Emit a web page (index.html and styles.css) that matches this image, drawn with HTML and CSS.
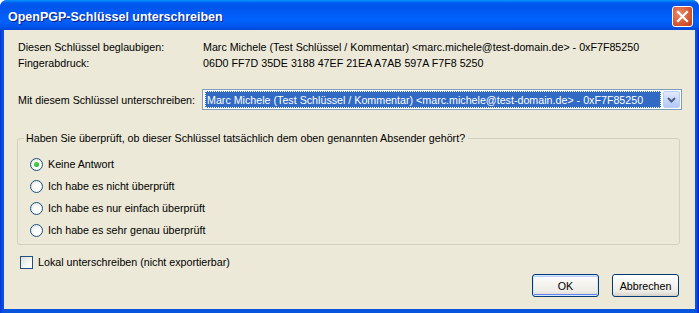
FILE: index.html
```html
<!DOCTYPE html>
<html lang="de">
<head>
  <meta charset="UTF-8">
  <title>OpenPGP-Schlüssel unterschreiben</title>
  <link rel="stylesheet" href="styles.css">
</head>
<body>
  <div class="window">
    <div class="titlebar">
      <span class="title">OpenPGP-Schlüssel unterschreiben</span>
      <button class="close" aria-label="Schließen">
        <svg width="13" height="13" viewBox="0 0 13 13">
          <path d="M2 2 L11 11 M11 2 L2 11" stroke="#fff" stroke-width="2.2" stroke-linecap="square"/>
        </svg>
      </button>
    </div>

    <div class="content">
      <div class="info">
        <span>Diesen Schlüssel beglaubigen:</span>
        <span>Marc Michele (Test Schlüssel / Kommentar) &lt;marc.michele@test-domain.de&gt; - 0xF7F85250</span>
        <span>Fingerabdruck:</span>
        <span>06D0 FF7D 35DE 3188 47EF 21EA A7AB 597A F7F8 5250</span>
      </div>

      <div class="signer">
        <label>Mit diesem Schlüssel unterschreiben:</label>
        <div class="combo">
          <span class="combo-value"><span class="combo-text">Marc Michele (Test Schlüssel / Kommentar) &lt;marc.michele@test-domain.de&gt; - 0xF7F85250</span></span>
          <span class="combo-btn">
            <svg width="9" height="6" viewBox="0 0 9 6">
              <path d="M1 1 L4.5 4.5 L8 1" fill="none" stroke="#4d6185" stroke-width="2"/>
            </svg>
          </span>
        </div>
      </div>

      <fieldset class="group">
        <legend>Haben Sie überprüft, ob dieser Schlüssel tatsächlich dem oben genannten Absender gehört?</legend>
        <label class="option"><input type="radio" name="trust" checked> Keine Antwort</label>
        <label class="option"><input type="radio" name="trust"> Ich habe es nicht überprüft</label>
        <label class="option"><input type="radio" name="trust"> Ich habe es nur einfach überprüft</label>
        <label class="option"><input type="radio" name="trust"> Ich habe es sehr genau überprüft</label>
      </fieldset>

      <label class="local"><input type="checkbox"> Lokal unterschreiben (nicht exportierbar)</label>

      <div class="actions">
        <button class="btn default">OK</button>
        <button class="btn">Abbrechen</button>
      </div>
    </div>
  </div>
</body>
</html>
```

FILE: styles.css
```css
body {
  margin: 0;
  background: #fff;
  font-family: 'Liberation Sans', Arial, sans-serif;
  font-size: 10.7px;
  color: #000;
}

.window {
  width: 699px;
  height: 313px;
  display: flex;
  flex-direction: column;
  border-radius: 7px 7px 0 0;
  overflow: hidden;
  background: linear-gradient(90deg, #0831d9 0, #0a4be0 2px, #0855dd 4px, #0855dd 695px, #0a4be0 697px, #0019cf 699px);
}

.titlebar {
  height: 30px;
  flex: none;
  display: flex;
  justify-content: space-between;
  align-items: center;
  padding: 3px 6px 0 8px;
  box-sizing: border-box;
  background: linear-gradient(180deg, #0997ff 0, #0058ee 3px, #0055ea 7px, #005cf8 14px, #0062fd 20px, #0057ec 26px, #0048d8 30px);
}

.title {
  color: #fff;
  font-family: 'Liberation Sans', Arial, sans-serif;
  font-weight: bold;
  font-size: 12.5px;
  text-shadow: 1px 1px 0 #0a1883;
}

.close {
  width: 21px;
  height: 21px;
  padding: 0;
  border: 1px solid #fff;
  border-radius: 3px;
  background: radial-gradient(circle at 35% 35%, #ea8b6e, #d75b36 55%, #c0391a);
  display: flex;
  justify-content: center;
  align-items: center;
}

.content {
  flex: 1;
  margin: 0 4px 4px;
  background: #ece9d8;
  padding: 9px 0 0 14px;
  display: flex;
  flex-direction: column;
}

.info {
  display: grid;
  grid-template-columns: 185px 1fr;
  line-height: 16px;
}

.signer {
  display: flex;
  align-items: center;
  margin-top: 18px;
}

.signer label {
  width: 184px;
}

.combo {
  width: 480px;
  height: 21px;
  box-sizing: border-box;
  border: 1px solid #7f9db9;
  background: #fff;
  display: flex;
  align-items: center;
  padding: 1px 1px 1px 2px;
}

.combo-value {
  flex: 1;
  height: 15px;
  background: #316ac5;
  color: #fff;
  border: 1px dotted #fff;
  margin-right: 2px;
  display: flex;
  align-items: center;
  padding-left: 1px;
}

.combo-text {
  white-space: nowrap;
}

.combo-btn {
  width: 17px;
  height: 17px;
  box-sizing: border-box;
  border: 1px solid #b9cdf6;
  border-radius: 2px;
  background: linear-gradient(180deg, #e1eafe, #c5d6fc 60%, #b4c8f7);
  display: flex;
  justify-content: center;
  align-items: center;
}

.group {
  margin: 22px 15px 0 -1px;
  padding: 8px 0 3px 12px;
  border: 1px solid #d0d0bf;
  border-radius: 3px;
}

.group legend {
  margin-left: -6px;
  padding: 0 3px 0 2px;
  line-height: 13px;
}

.option {
  display: flex;
  align-items: center;
  gap: 5px;
  height: 22px;
}

.option input {
  appearance: none;
  margin: 0;
  width: 13px;
  height: 13px;
  border: 1px solid #1c5180;
  border-radius: 50%;
  background: radial-gradient(circle at 60% 60%, #fff 30%, #dcdcd7);
  display: grid;
  place-items: center;
}

.option input:checked::after {
  content: '';
  width: 5px;
  height: 5px;
  border-radius: 50%;
  background: radial-gradient(circle at 40% 40%, #55d751, #21a121);
}

.local {
  display: flex;
  align-items: center;
  gap: 5px;
  margin: 10px 0 0 2px;
  line-height: 15px;
}

.local input {
  appearance: none;
  margin: 0;
  width: 13px;
  height: 13px;
  border: 1px solid #1c5180;
  background: linear-gradient(135deg, #dcdcd7, #fff 80%);
}

.actions {
  display: flex;
  justify-content: flex-end;
  gap: 13px;
  margin: 4px 16px 0 0;
}

.btn {
  width: 67px;
  height: 23px;
  padding: 0;
  border: 1px solid #003c74;
  border-radius: 3px;
  font-family: 'Liberation Sans', Arial, sans-serif;
  font-size: 10.7px;
  color: #000;
  background: linear-gradient(180deg, #fff, #f4f3ee 45%, #ecebe6 80%, #d6d0c5);
}

.btn.default {
  box-shadow: inset 0 0 0 1px #cee7ff, inset 0 -1px 0 1px #6982ee, inset 0 1px 0 1px #bccbf8;
}
```
